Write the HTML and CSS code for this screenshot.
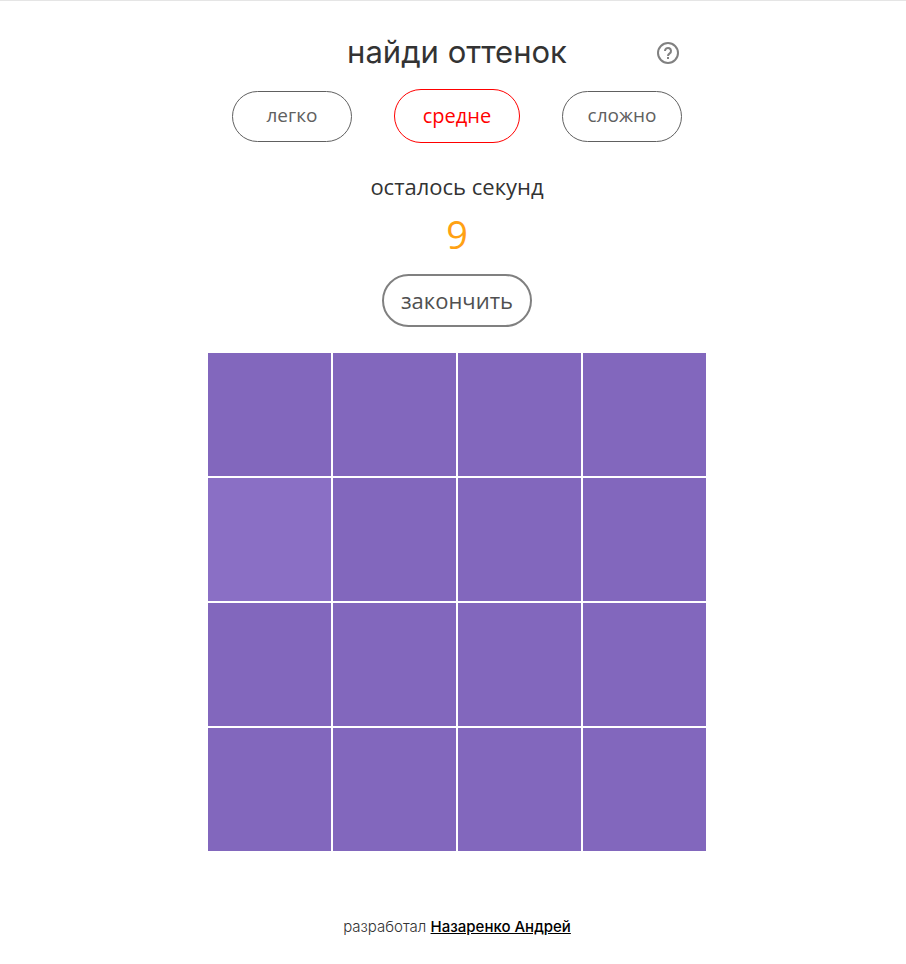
FILE: index.html
```html
<!DOCTYPE html>
<html lang="ru">
<head>
<meta charset="utf-8">
<meta name="viewport" content="width=device-width, initial-scale=1">
<title>найди оттенок</title>
<link rel="stylesheet" href="styles.css">
</head>
<body>
<main class="game">
  <header class="header">
    <h1 class="title">найди оттенок</h1>
    <button class="help" type="button" aria-label="Помощь">
      <svg viewBox="0 0 24 24" width="24" height="24" fill="none" stroke="#808080">
        <circle cx="12" cy="12" r="10" stroke-width="2"/>
        <path d="M9 10a3 3 0 1 1 4.700 2.400C12.600 13.200 12 13.700 12 15" stroke-width="2"/>
        <path d="M12 16v2" stroke-width="2"/>
      </svg>
    </button>
  </header>
  <nav class="levels">
    <button class="level" type="button">легко</button>
    <button class="level level-active" type="button">средне</button>
    <button class="level" type="button">сложно</button>
  </nav>
  <p class="label">осталось секунд</p>
  <p class="seconds">9</p>
  <button class="finish" type="button">закончить</button>
  <section class="board">
    <button class="cell" type="button"></button>
    <button class="cell" type="button"></button>
    <button class="cell" type="button"></button>
    <button class="cell" type="button"></button>
    <button class="cell cell-odd" type="button"></button>
    <button class="cell" type="button"></button>
    <button class="cell" type="button"></button>
    <button class="cell" type="button"></button>
    <button class="cell" type="button"></button>
    <button class="cell" type="button"></button>
    <button class="cell" type="button"></button>
    <button class="cell" type="button"></button>
    <button class="cell" type="button"></button>
    <button class="cell" type="button"></button>
    <button class="cell" type="button"></button>
    <button class="cell" type="button"></button>
  </section>
</main>
<footer class="footer">разработал <a class="author" href="#">Назаренко Андрей</a></footer>
</body>
</html>
```
FILE: styles.css
```css
* {
  box-sizing: border-box;
}

body {
  margin: 0;
  padding-left: 8px;
  border-top: 1px solid #e5e5e5;
  background: #fff;
  color: #333;
  font-family: "Open Sans", "Noto Sans", sans-serif;
}

button {
  padding: 0;
  background: none;
  font-family: inherit;
  cursor: pointer;
}

.game {
  display: flex;
  flex-direction: column;
  align-items: center;
  max-width: 498px;
  margin: 0 auto;
  padding-top: 32px;
}

.header {
  display: grid;
  grid-template-columns: 1fr auto 1fr;
  align-items: center;
  width: 100%;
  height: 40px;
}

.title {
  grid-column: 2;
  margin: 0;
  font: 400 31px/38px Inter, sans-serif;
  padding-bottom: 2px;
}

.help {
  justify-self: end;
  width: 24px;
  height: 24px;
  margin-right: 26px;
  border: 0;
}

.help svg {
  display: block;
}

.levels {
  display: flex;
  justify-content: space-between;
  align-items: center;
  width: calc(100% - 48px);
  height: 54px;
  margin-top: 16px;
}

.level {
  width: 120px;
  height: 51px;
  padding-bottom: 2px;
  border: 1px solid #606060;
  border-radius: 26px;
  color: #606060;
  font-size: 19px;
}

.level-active {
  width: 126px;
  height: 54px;
  border-color: #f00;
  border-radius: 27px;
  color: #f00;
  font-size: 20px;
}

.label {
  margin: 27px 0 0;
  font-size: 22px;
  line-height: 32px;
}

.seconds {
  margin: 8px 0 0;
  color: #ffa113;
  font-size: 38px;
  line-height: 48px;
}

.finish {
  width: 150px;
  height: 53px;
  margin-top: 16px;
  padding-bottom: 2px;
  border: 2px solid #808080;
  border-radius: 27px;
  color: #505050;
  font-size: 22px;
}

.board {
  display: grid;
  grid-template-columns: repeat(4, 1fr);
  gap: 2px;
  width: 100%;
  margin-top: 26px;
}

.cell {
  aspect-ratio: 1;
  border: 0;
  background: #8267bd;
}

.cell-odd {
  background: #8a6fc5;
}

.footer {
  margin-top: 66px;
  padding-bottom: 26px;
  font: 300 15px/20px Inter, sans-serif;
  text-align: center;
}

.author {
  color: #000;
  font-weight: 500;
}
```
